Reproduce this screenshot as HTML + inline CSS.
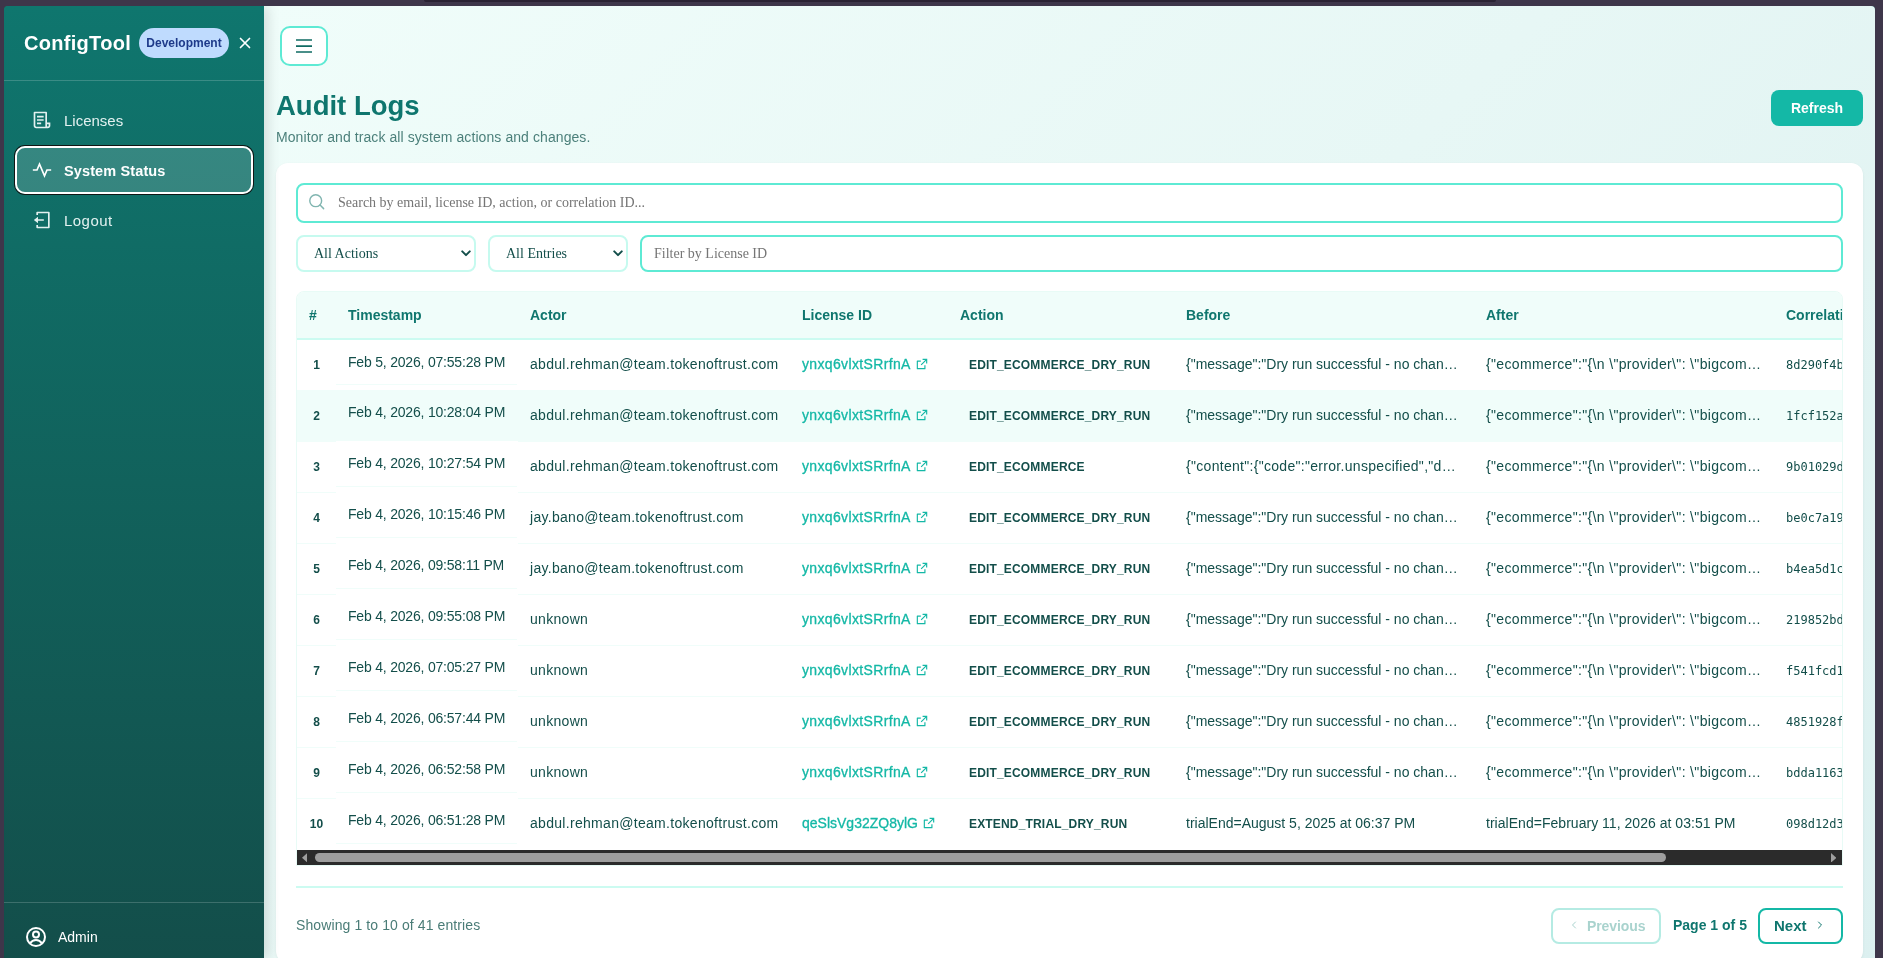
<!DOCTYPE html>
<html lang="en">
<head>
<meta charset="utf-8">
<title>ConfigTool - Audit Logs</title>
<style>
*{box-sizing:border-box;margin:0;padding:0}
html,body{width:1883px;height:958px;overflow:hidden}
body{background:#3e364a;font-family:"Liberation Sans",sans-serif;position:relative;color:#134e4a}
.abs{position:absolute}
#topstrip{left:424px;top:0;width:1072px;height:2px;background:#2a2233;border-radius:0 0 6px 6px}
#win{will-change:transform;left:4px;top:6px;width:1871px;height:960px;border-radius:4px 4px 0 0;overflow:hidden;background:#0f766e}
#mainbg{left:260px;top:0;width:1611px;height:960px;background:linear-gradient(135deg,#f0fdfa 0%,#e7f7f5 50%,#dcf0f0 100%)}
/* sidebar */
#side{left:0;top:0;width:260px;height:952px;background:linear-gradient(180deg,#0f766e 0%,#134e4a 100%);box-shadow:4px 0 12px rgba(0,0,0,.12);color:#fff}
#brand{left:20px;top:26px;font-size:20px;font-weight:700;letter-spacing:.3px;line-height:22px;white-space:nowrap}
#badge{left:135px;top:22px;width:90px;height:30px;border-radius:15px;background:#bfdbfe;color:#1e3a8a;font-size:12px;font-weight:700;line-height:30px;text-align:center}
#close{left:234px;top:30px;width:14px;height:14px}
.sdiv{left:0;width:260px;height:1px;background:rgba(255,255,255,.18)}
.nav{left:12px;width:236px;height:46px;font-size:15px;line-height:46px;white-space:nowrap;color:#e3f1f0}
.nav span{position:absolute;left:48px;top:1px}
.nav svg{position:absolute;left:16px;top:13px;width:20px;height:20px;fill:#e3f1f0}
.nav.act{left:11px;width:238px;height:48px;border-radius:10px;background:rgba(255,255,255,.16);border:2px solid #fff;box-shadow:0 0 0 1px #101514;font-weight:700;color:#fff;font-size:14.500px}
.nav.act span{left:47px;top:1px;line-height:44px;letter-spacing:.12px}
.nav.act svg{left:15px;top:12px;fill:#fff}
#admin{left:54px;top:923px;font-size:14px;line-height:16px}
#adminico{left:20px;top:919px;width:24px;height:24px}
/* main */
#burger{left:276px;top:20px;width:48px;height:40px;border:2px solid #5eead4;border-radius:10px;background:#fff}
#burger svg{position:absolute;left:14px;top:10px;width:16px;height:16px}
h1{left:272px;top:83px;font-size:27.500px;font-weight:700;color:#0f766e;line-height:34px;white-space:nowrap}
#sub{left:272px;top:122px;font-size:14px;letter-spacing:.08px;color:#4c807b;line-height:18px;white-space:nowrap}
#refresh{left:1767px;top:84px;width:92px;height:36px;border-radius:8px;background:#14b8a6;color:#fff;font-weight:700;font-size:14px;line-height:36px;text-align:center}
#card{left:272px;top:157px;width:1587px;height:800px;border-radius:12px;background:#fff;box-shadow:0 1px 3px rgba(0,0,0,.06)}

#search{left:20px;top:20px;width:1547px;height:40px;border:2px solid #5eead4;border-radius:8px;background:#fff;font-family:"Liberation Serif",serif;font-size:14px;color:#757575;line-height:36px}
#search svg{position:absolute;left:9px;top:7px;width:19px;height:19px}
#search span{position:absolute;left:40px;top:0;white-space:nowrap}
.sel{top:72px;height:37px;border:2px solid #c6faef;border-radius:8px;background:#fff;font-family:"Liberation Serif",serif;font-size:14px;color:#134e4a;line-height:33px;white-space:nowrap}
.sel span{position:absolute;left:16px;top:0}
.sel svg{position:absolute;right:3px;top:13px;width:10px;height:7px}
#sel1{left:20px;width:180px}
#sel2{left:212px;width:140px}
#filt{left:364px;top:72px;width:1203px;height:37px;border:2px solid #5eead4;border-radius:8px;background:#fff;font-family:"Liberation Serif",serif;font-size:14px;color:#757575;line-height:33px}
#filt span{position:absolute;left:12px;top:0;white-space:nowrap}
#tw{left:20px;top:128px;width:1547px;height:575px;border:1px solid #e8fbf6;border-radius:8px 8px 0 0;overflow:hidden;background:#fff}
table{border-collapse:separate;border-spacing:0;table-layout:fixed;width:1637px;position:absolute;left:0;top:0}
th{height:48px;background:#f0fdfa;border-bottom:2px solid #ccfbf1;text-align:left;padding:0 12px;font-size:14px;font-weight:700;color:#0f766e;white-space:nowrap}
td.n{text-align:center;padding:0}
tbody tr{height:51px}
td{height:51px;border-top:1px solid #f0fdfa;padding:0 12px;font-size:14px;color:#134e4a;white-space:nowrap;overflow:hidden;position:relative;vertical-align:middle}
tbody tr:first-child,tbody tr:first-child td{height:50px;border-top:none}
tr.hov td{background:#f0fdfa}
td.n{font-weight:700;font-size:12px}
td.ac{letter-spacing:.3px}
td.ac,td.bf,td.af,td.li,td.at{padding-bottom:2px}
td.af{letter-spacing:.35px}
td.ts span{position:relative;top:-3px;letter-spacing:-.2px}
td.ts{border-top-color:transparent}
tbody tr:nth-child(n+2) td.ts span{top:-4px}
td.ts i{position:absolute;left:0;right:1px;bottom:5px;height:1px;background:#f0fdfa}
tr.hov td.ts i{background:#fff;opacity:.0}
td.li a{color:#14b8a6;-webkit-text-stroke:.3px #14b8a6;letter-spacing:.35px}
td.li .ext{width:14px;height:14px;fill:#14b8a6;margin-left:4px;vertical-align:-2px}
td.at{padding-left:21px}
td.at b{font-size:12px;letter-spacing:.17px}
td.co{font-family:"DejaVu Sans Mono","Liberation Mono",monospace;font-size:12px}
#sb{left:0;top:558px;width:1545px;height:15px;background:#2b2b2b}
#thumb{left:18px;top:3px;width:1351px;height:9px;border-radius:5px;background:#9e9e9e}
#fline{left:20px;top:723px;width:1547px;height:2px;background:#ccfbf1}
#showing{left:20px;top:753px;letter-spacing:.1px;font-size:14px;line-height:18px;color:#4a7c77;white-space:nowrap}
.pbtn{top:745px;height:36px;border-radius:8px;border:2px solid #14b8a6;color:#0f766e;font-weight:700;font-size:15px;line-height:32px;white-space:nowrap;background:#fff}
.pbtn svg{position:absolute;top:9px;width:12px;height:12px}
#prev{left:1275px;width:110px;border-color:#b5ebe3;color:#a9d3ce}
#prev svg{left:15px}
#prev span{position:absolute;left:34px;font-size:14px;letter-spacing:-.1px}
#next{left:1482px;width:85px}
#next span{position:absolute;left:14px}
#next svg{right:15px}
#pageof{left:1397px;top:753px;font-size:14px;font-weight:700;color:#0f766e;line-height:18px;white-space:nowrap}
</style>
</head>
<body>
<div id="topstrip" class="abs"></div>
<div id="win" class="abs">
  <div id="mainbg" class="abs"></div>
  <div id="card" class="abs">
    <div id="search" class="abs"><svg viewBox="0 0 24 24"><circle cx="11" cy="11" r="7.500" fill="none" stroke="#80b5b0" stroke-width="1.800"/><path d="M16.500 16.500 21 21" stroke="#80b5b0" stroke-width="1.800" stroke-linecap="round"/></svg><span>Search by email, license ID, action, or correlation ID...</span></div>
    <div id="sel1" class="sel abs"><span>All Actions</span><svg viewBox="0 0 12 8"><path d="M1.5 1.5 6 6l4.500-4.500" fill="none" stroke="#134e4a" stroke-width="2.400" stroke-linecap="round" stroke-linejoin="round"/></svg></div>
    <div id="sel2" class="sel abs"><span>All Entries</span><svg viewBox="0 0 12 8"><path d="M1.5 1.5 6 6l4.500-4.500" fill="none" stroke="#134e4a" stroke-width="2.400" stroke-linecap="round" stroke-linejoin="round"/></svg></div>
    <div id="filt" class="abs"><span>Filter by License ID</span></div>
    <div id="tw" class="abs">
      <table>
        <colgroup><col style="width:39px"><col style="width:182px"><col style="width:272px"><col style="width:158px"><col style="width:226px"><col style="width:300px"><col style="width:300px"><col style="width:160px"></colgroup>
        <thead><tr><th class="n">#</th><th>Timestamp</th><th>Actor</th><th>License ID</th><th>Action</th><th>Before</th><th>After</th><th>Correlation ID</th></tr></thead>
        <tbody>
          <tr><td class="n">1</td><td class="ts"><span>Feb 5, 2026, 07:55:28 PM</span><i></i></td><td class="ac">abdul.rehman@team.tokenoftrust.com</td><td class="li"><a>ynxq6vlxtSRrfnA</a><svg class="ext" viewBox="0 0 24 24"><path d="M10 6V8H5V19H16V14H18V20C18 20.552 17.552 21 17 21H4C3.448 21 3 20.552 3 20V7C3 6.448 3.448 6 4 6H10ZM21 3V11H19L19 6.413L11.207 14.207L9.793 12.793L17.585 5H13V3H21Z"/></svg></td><td class="at"><b>EDIT_ECOMMERCE_DRY_RUN</b></td><td class="bf">{"message":"Dry run successful - no chan…</td><td class="af">{"ecommerce":"{\n \"provider\": \"bigcom…</td><td class="co">8d290f4b</td></tr>
          <tr class="hov"><td class="n">2</td><td class="ts"><span>Feb 4, 2026, 10:28:04 PM</span><i></i></td><td class="ac">abdul.rehman@team.tokenoftrust.com</td><td class="li"><a>ynxq6vlxtSRrfnA</a><svg class="ext" viewBox="0 0 24 24"><path d="M10 6V8H5V19H16V14H18V20C18 20.552 17.552 21 17 21H4C3.448 21 3 20.552 3 20V7C3 6.448 3.448 6 4 6H10ZM21 3V11H19L19 6.413L11.207 14.207L9.793 12.793L17.585 5H13V3H21Z"/></svg></td><td class="at"><b>EDIT_ECOMMERCE_DRY_RUN</b></td><td class="bf">{"message":"Dry run successful - no chan…</td><td class="af">{"ecommerce":"{\n \"provider\": \"bigcom…</td><td class="co">1fcf152a</td></tr>
          <tr><td class="n">3</td><td class="ts"><span>Feb 4, 2026, 10:27:54 PM</span><i></i></td><td class="ac">abdul.rehman@team.tokenoftrust.com</td><td class="li"><a>ynxq6vlxtSRrfnA</a><svg class="ext" viewBox="0 0 24 24"><path d="M10 6V8H5V19H16V14H18V20C18 20.552 17.552 21 17 21H4C3.448 21 3 20.552 3 20V7C3 6.448 3.448 6 4 6H10ZM21 3V11H19L19 6.413L11.207 14.207L9.793 12.793L17.585 5H13V3H21Z"/></svg></td><td class="at"><b>EDIT_ECOMMERCE</b></td><td class="bf" style="letter-spacing:.3px">{"content":{"code":"error.unspecified","d…</td><td class="af">{"ecommerce":"{\n \"provider\": \"bigcom…</td><td class="co">9b01029d</td></tr>
          <tr><td class="n">4</td><td class="ts"><span>Feb 4, 2026, 10:15:46 PM</span><i></i></td><td class="ac">jay.bano@team.tokenoftrust.com</td><td class="li"><a>ynxq6vlxtSRrfnA</a><svg class="ext" viewBox="0 0 24 24"><path d="M10 6V8H5V19H16V14H18V20C18 20.552 17.552 21 17 21H4C3.448 21 3 20.552 3 20V7C3 6.448 3.448 6 4 6H10ZM21 3V11H19L19 6.413L11.207 14.207L9.793 12.793L17.585 5H13V3H21Z"/></svg></td><td class="at"><b>EDIT_ECOMMERCE_DRY_RUN</b></td><td class="bf">{"message":"Dry run successful - no chan…</td><td class="af">{"ecommerce":"{\n \"provider\": \"bigcom…</td><td class="co">be0c7a19</td></tr>
          <tr><td class="n">5</td><td class="ts"><span>Feb 4, 2026, 09:58:11 PM</span><i></i></td><td class="ac">jay.bano@team.tokenoftrust.com</td><td class="li"><a>ynxq6vlxtSRrfnA</a><svg class="ext" viewBox="0 0 24 24"><path d="M10 6V8H5V19H16V14H18V20C18 20.552 17.552 21 17 21H4C3.448 21 3 20.552 3 20V7C3 6.448 3.448 6 4 6H10ZM21 3V11H19L19 6.413L11.207 14.207L9.793 12.793L17.585 5H13V3H21Z"/></svg></td><td class="at"><b>EDIT_ECOMMERCE_DRY_RUN</b></td><td class="bf">{"message":"Dry run successful - no chan…</td><td class="af">{"ecommerce":"{\n \"provider\": \"bigcom…</td><td class="co">b4ea5d1c</td></tr>
          <tr><td class="n">6</td><td class="ts"><span>Feb 4, 2026, 09:55:08 PM</span><i></i></td><td class="ac">unknown</td><td class="li"><a>ynxq6vlxtSRrfnA</a><svg class="ext" viewBox="0 0 24 24"><path d="M10 6V8H5V19H16V14H18V20C18 20.552 17.552 21 17 21H4C3.448 21 3 20.552 3 20V7C3 6.448 3.448 6 4 6H10ZM21 3V11H19L19 6.413L11.207 14.207L9.793 12.793L17.585 5H13V3H21Z"/></svg></td><td class="at"><b>EDIT_ECOMMERCE_DRY_RUN</b></td><td class="bf">{"message":"Dry run successful - no chan…</td><td class="af">{"ecommerce":"{\n \"provider\": \"bigcom…</td><td class="co">219852bd</td></tr>
          <tr><td class="n">7</td><td class="ts"><span>Feb 4, 2026, 07:05:27 PM</span><i></i></td><td class="ac">unknown</td><td class="li"><a>ynxq6vlxtSRrfnA</a><svg class="ext" viewBox="0 0 24 24"><path d="M10 6V8H5V19H16V14H18V20C18 20.552 17.552 21 17 21H4C3.448 21 3 20.552 3 20V7C3 6.448 3.448 6 4 6H10ZM21 3V11H19L19 6.413L11.207 14.207L9.793 12.793L17.585 5H13V3H21Z"/></svg></td><td class="at"><b>EDIT_ECOMMERCE_DRY_RUN</b></td><td class="bf">{"message":"Dry run successful - no chan…</td><td class="af">{"ecommerce":"{\n \"provider\": \"bigcom…</td><td class="co">f541fcd1</td></tr>
          <tr><td class="n">8</td><td class="ts"><span>Feb 4, 2026, 06:57:44 PM</span><i></i></td><td class="ac">unknown</td><td class="li"><a>ynxq6vlxtSRrfnA</a><svg class="ext" viewBox="0 0 24 24"><path d="M10 6V8H5V19H16V14H18V20C18 20.552 17.552 21 17 21H4C3.448 21 3 20.552 3 20V7C3 6.448 3.448 6 4 6H10ZM21 3V11H19L19 6.413L11.207 14.207L9.793 12.793L17.585 5H13V3H21Z"/></svg></td><td class="at"><b>EDIT_ECOMMERCE_DRY_RUN</b></td><td class="bf">{"message":"Dry run successful - no chan…</td><td class="af">{"ecommerce":"{\n \"provider\": \"bigcom…</td><td class="co">4851928f</td></tr>
          <tr><td class="n">9</td><td class="ts"><span>Feb 4, 2026, 06:52:58 PM</span><i></i></td><td class="ac">unknown</td><td class="li"><a>ynxq6vlxtSRrfnA</a><svg class="ext" viewBox="0 0 24 24"><path d="M10 6V8H5V19H16V14H18V20C18 20.552 17.552 21 17 21H4C3.448 21 3 20.552 3 20V7C3 6.448 3.448 6 4 6H10ZM21 3V11H19L19 6.413L11.207 14.207L9.793 12.793L17.585 5H13V3H21Z"/></svg></td><td class="at"><b>EDIT_ECOMMERCE_DRY_RUN</b></td><td class="bf">{"message":"Dry run successful - no chan…</td><td class="af">{"ecommerce":"{\n \"provider\": \"bigcom…</td><td class="co">bdda1163</td></tr>
          <tr><td class="n">10</td><td class="ts"><span>Feb 4, 2026, 06:51:28 PM</span><i></i></td><td class="ac">abdul.rehman@team.tokenoftrust.com</td><td class="li"><a style="letter-spacing:0">qeSlsVg32ZQ8ylG</a><svg class="ext" viewBox="0 0 24 24"><path d="M10 6V8H5V19H16V14H18V20C18 20.552 17.552 21 17 21H4C3.448 21 3 20.552 3 20V7C3 6.448 3.448 6 4 6H10ZM21 3V11H19L19 6.413L11.207 14.207L9.793 12.793L17.585 5H13V3H21Z"/></svg></td><td class="at"><b>EXTEND_TRIAL_DRY_RUN</b></td><td class="bf">trialEnd=August 5, 2025 at 06:37 PM</td><td class="af" style="letter-spacing:.03px">trialEnd=February 11, 2026 at 03:51 PM</td><td class="co">098d12d3</td></tr>
        </tbody>
      </table>
      <div id="sb" class="abs"><div id="thumb" class="abs"></div><svg class="abs" style="left:4.800px;top:2.700px" width="5.400" height="9.600" viewBox="0 0 5.400 9.600"><path d="M5.400 0v9.600L0 4.800z" fill="#9e9e9e"/></svg><svg class="abs" style="right:5.800px;top:2.700px" width="5.400" height="9.600" viewBox="0 0 5.400 9.600"><path d="M0 0v9.600l5.400-4.800z" fill="#9e9e9e"/></svg></div>
    </div>
    <div id="fline" class="abs"></div>
    <div id="showing" class="abs">Showing 1 to 10 of 41 entries</div>
    <div id="prev" class="pbtn abs"><svg viewBox="0 0 24 24"><path d="M15 6l-6 6 6 6" fill="none" stroke="currentColor" stroke-width="2" stroke-linecap="round" stroke-linejoin="round"/></svg><span>Previous</span></div>
    <div id="pageof" class="abs">Page 1 of 5</div>
    <div id="next" class="pbtn abs"><span>Next</span><svg viewBox="0 0 24 24"><path d="M9 6l6 6-6 6" fill="none" stroke="currentColor" stroke-width="2" stroke-linecap="round" stroke-linejoin="round"/></svg></div>
  </div>
  <div id="side" class="abs">
    <div id="brand" class="abs">ConfigTool</div>
    <div id="badge" class="abs">Development</div>
    <svg id="close" class="abs" viewBox="0 0 14 14"><path d="M2.500 2.500 L11.500 11.500 M11.500 2.500 L2.500 11.500" stroke="#fff" stroke-width="1.7" fill="none" stroke-linecap="round"/></svg>
    <div class="sdiv abs" style="top:74px"></div>
    <div class="nav abs" style="top:91px"><svg viewBox="0 0 24 24"><path d="M19 22H5C3.343 22 2 20.657 2 19V3C2 2.448 2.448 2 3 2H17C17.552 2 18 2.448 18 3V15H22V19C22 20.657 20.657 22 19 22ZM18 17V19C18 19.552 18.448 20 19 20C19.552 20 20 19.552 20 19V17H18ZM16 20V4H4V19C4 19.552 4.448 20 5 20H16ZM6 7H14V9H6V7ZM6 11H14V13H6V11ZM6 15H11V17H6V15Z"/></svg><span>Licenses</span></div>
    <div class="nav act abs" style="top:140px"><svg viewBox="0 0 24 24"><path d="M9 7.539L15 21.539L18.659 13H23V11H17.341L15 16.461L9 2.461L5.341 11H1V13H6.659L9 7.539Z"/></svg><span>System Status</span></div>
    <div class="nav abs" style="top:191px"><svg viewBox="0 0 24 24" style="left:17px"><path d="M4 18H6V20H18V4H6V6H4V3C4 2.448 4.448 2 5 2H19C19.552 2 20 2.448 20 3V21C20 21.552 19.552 22 19 22H5C4.448 22 4 21.552 4 21V18ZM6 11H13V13H6V16L1 12L6 8V11Z"/></svg><span style="letter-spacing:.45px">Logout</span></div>
    <div class="sdiv abs" style="top:896px"></div>
    <svg id="adminico" class="abs" viewBox="0 0 24 24" fill="none" stroke="#fff" stroke-width="2"><circle cx="12" cy="12" r="9"/><circle cx="12" cy="9.500" r="3"/><path d="M6 18.400C7.400 16.300 9.600 15 12 15s4.600 1.300 6 3.400"/></svg>
    <div id="admin" class="abs">Admin</div>
  </div>
  <div id="burger" class="abs"><svg viewBox="0 0 16 16"><path d="M0 2h16M0 8.100h16M0 14h16" stroke="#0f6b63" stroke-width="1.700" fill="none"/></svg></div>
  <h1 class="abs">Audit Logs</h1>
  <div id="sub" class="abs">Monitor and track all system actions and changes.</div>
  <div id="refresh" class="abs">Refresh</div>
</div>
</body>
</html>
